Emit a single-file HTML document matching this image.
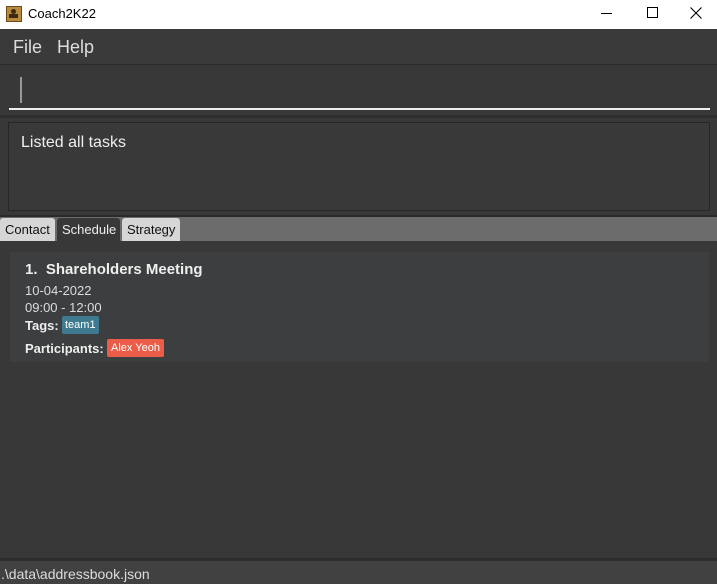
<!DOCTYPE html><html><head><style>
body{margin:0;width:717px;height:584px;background:#383838;font-family:"Liberation Sans",sans-serif;position:relative;overflow:hidden}
div,span{position:absolute;box-sizing:border-box}
.t{white-space:nowrap}
</style></head><body>
<div style="left:0;top:0;width:717px;height:29px;background:#fff"></div>
<div style="left:6px;top:6px;width:16px;height:16px;background:#b8893e;border:1px solid #6b4a1c"></div>
<div style="left:11px;top:9px;width:5px;height:5px;background:#3a2a10;border-radius:50%"></div>
<div style="left:9px;top:14px;width:9px;height:4px;background:#3a2a10"></div>
<div class="t" style="left:28px;top:6px;font-size:13px;color:#000">Coach2K22</div>
<div style="left:601px;top:13px;width:11px;height:1px;background:#000"></div>
<div style="left:647px;top:7px;width:11px;height:11px;border:1px solid #000"></div>
<svg style="position:absolute;left:690px;top:7px" width="12" height="12"><path d="M0.5 0.5L11.5 11.5M11.5 0.5L0.5 11.5" stroke="#000" stroke-width="1.1"/></svg>
<div style="left:0;top:29px;width:717px;height:35px;background:#3a3a3a"></div>
<div class="t" style="left:13px;top:37px;font-size:18px;color:#ddd">File</div>
<div class="t" style="left:57px;top:37px;font-size:18px;color:#ddd">Help</div>
<div style="left:0;top:64px;width:717px;height:1px;background:#2a2a2a"></div>
<div style="left:0;top:65px;width:717px;height:50px;background:#383838"></div>
<div style="left:20px;top:77px;width:2px;height:26px;background:#999"></div>
<div style="left:9px;top:108px;width:701px;height:2px;background:#eee"></div>
<div style="left:0;top:115px;width:717px;height:3px;background:#2e2e2e"></div>
<div style="left:8px;top:122px;width:702px;height:89px;border:1px solid #262626;background:#393939"></div>
<div class="t" style="left:21px;top:134px;font-size:16px;color:#eee">Listed all tasks</div>
<div style="left:0;top:215px;width:717px;height:2px;background:#2a2a2a"></div>
<div style="left:0;top:217px;width:717px;height:24px;background:#6c6c6c"></div>
<div style="left:0;top:218px;width:55px;height:23px;background:#d6d6d6;border-radius:3px 3px 0 0"></div>
<div class="t" style="left:5px;top:222px;font-size:13px;color:#111">Contact</div>
<div style="left:57px;top:218px;width:63px;height:23px;background:#383838;border-radius:3px 3px 0 0"></div>
<div class="t" style="left:62px;top:222px;font-size:13px;color:#eee">Schedule</div>
<div style="left:122px;top:218px;width:58px;height:23px;background:#d6d6d6;border-radius:3px 3px 0 0"></div>
<div class="t" style="left:127px;top:222px;font-size:13px;color:#111">Strategy</div>
<div style="left:10px;top:252px;width:699px;height:110px;background:#3c3e3f"></div>
<div class="t" style="left:25px;top:261px;font-size:15px;color:#eee;font-weight:bold">1.&nbsp; Shareholders Meeting</div>
<div class="t" style="left:25px;top:283px;font-size:13px;color:#ddd">10-04-2022</div>
<div class="t" style="left:25px;top:300px;font-size:13px;color:#ddd">09:00 - 12:00</div>
<div class="t" style="left:25px;top:318px;font-size:13px;color:#eee;font-weight:bold">Tags:</div>
<div class="t" style="left:62px;top:316px;height:18px;line-height:18px;padding:0 3px;font-size:11px;background:#3e7b91;color:#fff;border-radius:2px">team1</div>
<div class="t" style="left:25px;top:341px;font-size:13px;color:#eee;font-weight:bold">Participants:</div>
<div class="t" style="left:107px;top:339px;height:18px;line-height:18px;padding:0 4px;font-size:11px;background:#eb5d49;color:#fff;border-radius:2px">Alex Yeoh</div>
<div style="left:0;top:558px;width:717px;height:3px;background:#2c2c2c"></div>
<div style="left:0;top:561px;width:717px;height:23px;background:#414141"></div>
<div class="t" style="left:1px;top:566px;font-size:14px;color:#ddd">.\data\addressbook.json</div>
</body></html>
